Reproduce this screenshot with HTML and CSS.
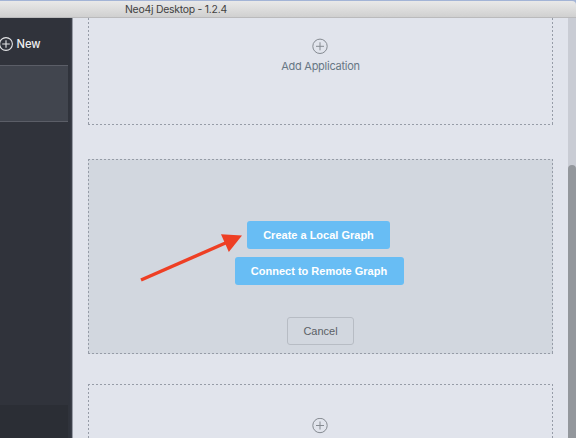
FILE: index.html
```
<!DOCTYPE html>
<html lang="en">
<head>
<meta charset="utf-8">
<title>Neo4j Desktop</title>
<link rel="stylesheet" href="styles.css">
</head>
<body>
<div class="window">
  <header class="titlebar"><span class="title">Neo4j Desktop - 1.2.4</span></header>
  <div class="body">
    <aside class="sidebar">
      <div class="new">
        <svg class="new-icon" width="14" height="16" viewBox="0 0 14 16"><g fill="none" stroke="#e4e5e7" stroke-width="1.1"><circle cx="6" cy="8" r="6.4"/><path d="M2.2 8h7.6M6 4.2v7.6"/></g></svg>
        <span class="new-label">New</span>
      </div>
      <div class="project"></div>
      <div class="side-footer"></div>
    </aside>
    <main class="content">
      <section class="card card-app">
        <svg class="plus" width="17" height="16" viewBox="0 0 17 16"><g fill="none" stroke="#858a91"><circle cx="8" cy="8.3" r="7.2"/><path d="M4 8.3h8M8 4.3v8"/></g></svg>
        <span class="add-label">Add Application</span>
      </section>
      <section class="card card-graph">
        <button class="btn primary local"><span>Create a Local Graph</span></button>
        <button class="btn primary remote"><span>Connect to Remote Graph</span></button>
        <button class="btn cancel"><span>Cancel</span></button>
      </section>
      <section class="card card-next">
        <svg class="plus" width="17" height="16" viewBox="0 0 17 16"><g fill="none" stroke="#858a91"><circle cx="8" cy="7.5" r="7.2"/><path d="M4 7.5h8M8 3.5v8"/></g></svg>
      </section>
    </main>
    <div class="scroll"><div class="thumb"></div></div>
  </div>
  <svg class="arrow" width="106" height="54" viewBox="0 0 106 54"><path d="M3 49 88 11.8" stroke="#ee3f24" stroke-width="3.4"/><path d="M104 4.6 83 3.2l7.8 17.8z" fill="#ee3f24"/></svg>
</div>
</body>
</html>
```
FILE: styles.css
```
* { box-sizing: border-box; }
body {
  margin: 0;
  font-family: "Liberation Sans", Arial, sans-serif;
}
.window {
  position: relative;
  width: 576px;
  height: 438px;
  display: flex;
  flex-direction: column;
  overflow: hidden;
  background: #a3b4d6;
}
.titlebar {
  flex: none;
  height: 17px;
  margin-top: 1px;
  padding-left: 125px;
  border-bottom: 1px solid #bababc;
  border-top-right-radius: 4px;
  background: linear-gradient(#e9e9e9, #d0d0d0);
}
.title {
  display: block;
  color: #414141;
  font: 10.4px/17px Inter, sans-serif;
  letter-spacing: -0.23px;
  white-space: nowrap;
}
.body {
  flex: 1;
  min-height: 0;
  display: flex;
  background: #e1e4ec;
}
.sidebar {
  width: 73px;
  display: flex;
  flex-direction: column;
  border-right: 1px solid #989ca6;
  background: linear-gradient(90deg, #30333b 68px, #2f333c 70px, #40444e 72px);
}
.new {
  height: 47px;
  padding-top: 18px;
  display: flex;
  gap: 2px;
}
.new-icon { overflow: visible; }
.new-label {
  padding-left: 0.5px;
  color: #f0f1f2;
  font: 500 11.2px/17px Inter, sans-serif;
}
.project {
  width: 68px;
  height: 57px;
  border: solid #5b5e67;
  border-width: 1px 0;
  background: #41454e;
}
.side-footer {
  width: 68px;
  height: 33px;
  margin-top: auto;
  background: #2b2e35;
}
.content {
  width: 495px;
  padding-left: 15px;
  overflow: hidden;
}
.card {
  --h: repeating-linear-gradient(90deg, #969ca7 0 2.5px, transparent 2.5px 4px);
  --v: repeating-linear-gradient(180deg, #969ca7 0 2.5px, transparent 2.5px 4px);
  width: 465px;
  display: flex;
  flex-direction: column;
  align-items: center;
  background:
    var(--h) 0 0 / 100% 1px no-repeat,
    var(--h) 0 100% / 100% 1px no-repeat,
    var(--v) 0 0 / 1px 100% no-repeat,
    var(--v) 100% 0 / 1px 100% no-repeat;
}
.card-app {
  height: 107px;
  padding-top: 20px;
  background:
    var(--h) 0 100% / 100% 1px no-repeat,
    var(--v) 0 0 / 1px 100% no-repeat,
    var(--v) 100% 0 / 1px 100% no-repeat;
}
.plus { display: block; }
.add-label {
  margin-top: 4px;
  color: #687785;
  font: 11px/16px Inter, sans-serif;
  letter-spacing: -0.25px;
  white-space: nowrap;
}
.card-graph {
  height: 195px;
  margin-top: 34px;
  padding-top: 62px;
  background-color: #d2d7df;
}
.btn {
  height: 28px;
  padding: 0;
  border: 0;
  border-radius: 3px;
  font: 11px/28px "Liberation Sans", Arial, sans-serif;
  text-align: center;
  white-space: nowrap;
}
.primary {
  background: #68bdf4;
  color: #fff;
  font-weight: bold;
}
.local { width: 143px; margin-right: 4px; }
.remote { width: 169px; margin: 8px 3px 0 0; }
.cancel {
  width: 67px;
  margin-top: 32px;
  border: 1px solid #b7bcc4;
  background: transparent;
  color: #5b6066;
  line-height: 26px;
}
.card-next {
  height: 110px;
  margin-top: 30px;
  padding-top: 34px;
}
.scroll {
  flex: 1;
  padding-top: 147px;
  background: #c9ccd4;
}
.thumb {
  height: 400px;
  border-radius: 4px 4px 0 0;
  background: #93979c;
}
.arrow {
  position: absolute;
  left: 138px;
  top: 231px;
}
```
